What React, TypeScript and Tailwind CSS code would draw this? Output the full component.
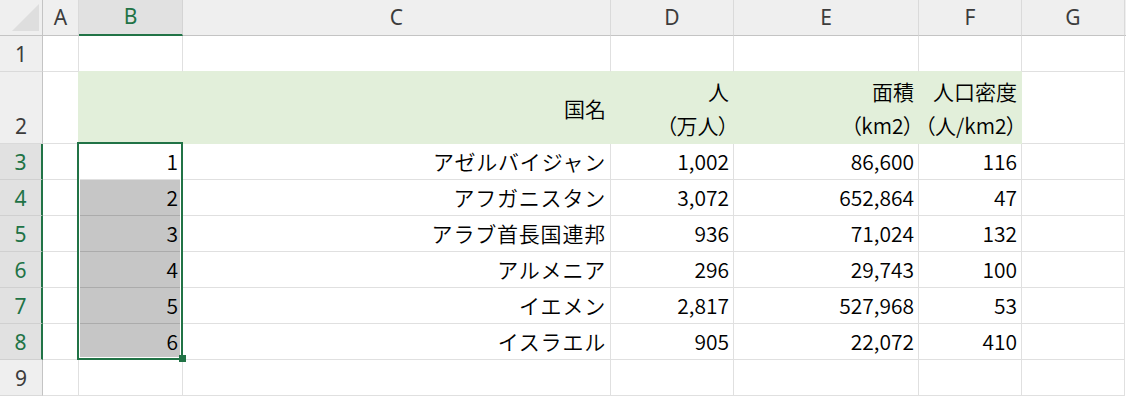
import React from "react";

type Row = [string, string, string, string, string];

const data: Row[] = [
  ["1", "アゼルバイジャン", "1,002", "86,600", "116"],
  ["2", "アフガニスタン", "3,072", "652,864", "47"],
  ["3", "アラブ首長国連邦", "936", "71,024", "132"],
  ["4", "アルメニア", "296", "29,743", "100"],
  ["5", "イエメン", "2,817", "527,968", "53"],
  ["6", "イスラエル", "905", "22,072", "410"],
];

function ColHead({ label, selected = false }: { label: string; selected?: boolean }) {
  return selected ? (
    <div className="flex items-center justify-center bg-[#e1e1e1] border-r border-r-[#d4d4d4] border-b-2 border-b-[#217346] text-[#217346] text-[21px] font-normal font-['Noto_Sans',sans-serif]">
      {label}
    </div>
  ) : (
    <div className="flex items-center justify-center bg-[#efefef] border-r border-r-[#dadada] border-b border-b-[#c4c4c4] text-[#3c3c3c] text-[21px] font-normal font-['Noto_Sans',sans-serif]">
      {label}
    </div>
  );
}

function RowHead({ label, selected = false }: { label: string; selected?: boolean }) {
  return selected ? (
    <div className="flex items-end justify-center bg-[#e1e1e1] border-r-2 border-r-[#217346] border-b border-b-[#d0d0d0] text-[#217346] text-[21px] font-normal font-['Noto_Sans',sans-serif]">
      <span className="leading-[34px]">{label}</span>
    </div>
  ) : (
    <div className="flex items-end justify-center bg-[#efefef] border-r border-r-[#c4c4c4] border-b border-b-[#dadada] text-[#3c3c3c] text-[21px] font-normal font-['Noto_Sans',sans-serif]">
      <span className="leading-[34px]">{label}</span>
    </div>
  );
}

function Cell({ children }: { children?: React.ReactNode }) {
  return (
    <div className="flex items-center justify-end pr-[4px] whitespace-nowrap border-r border-b border-[#e0e0e0] text-[21px]">
      {children}
    </div>
  );
}

function GreenCell({ children }: { children?: React.ReactNode }) {
  return (
    <div className="flex flex-col items-end justify-center pr-[4px] whitespace-nowrap border-r border-b border-[#e2efda] bg-[#e2efda] text-[21px] leading-[34px]">
      {children}
    </div>
  );
}

export default function App() {
  return (
    <div className="relative w-[1126px] h-[396px] overflow-hidden bg-white text-black font-[350] font-['Noto_Sans_CJK_JP',sans-serif]">
      <div className="grid w-full h-full grid-cols-[43px_36px_104px_428px_123px_185px_103px_103px_1fr] grid-rows-[36px_36px_72px_repeat(7,36px)]">
        {/* header row */}
        <div className="relative bg-[#efefef] border-r border-b border-[#c4c4c4]">
          <svg className="absolute left-0 top-0" width="43" height="36" viewBox="0 0 43 36">
            <polygon points="12,31 39,4 39,31" fill="#dedede" />
          </svg>
        </div>
        <ColHead label="A" />
        <ColHead label="B" selected />
        <ColHead label="C" />
        <ColHead label="D" />
        <ColHead label="E" />
        <ColHead label="F" />
        <ColHead label="G" />
        <div className="bg-[#efefef] border-b border-b-[#c4c4c4]" />

        {/* row 1 */}
        <RowHead label="1" />
        <Cell />
        <div className="border-r border-r-[#e0e0e0] border-b border-b-[#e2efda]" />
        <div className="border-r border-r-[#e0e0e0] border-b border-b-[#e2efda]" />
        <div className="border-r border-r-[#e0e0e0] border-b border-b-[#e2efda]" />
        <div className="border-r border-r-[#e0e0e0] border-b border-b-[#e2efda]" />
        <div className="border-r border-r-[#e0e0e0] border-b border-b-[#e2efda]" />
        <Cell />
        <div />

        {/* row 2 */}
        <RowHead label="2" />
        <div className="border-r border-r-[#e2efda] border-b border-b-[#e0e0e0]" />
        <GreenCell />
        <GreenCell>
          <span>国名</span>
        </GreenCell>
        <GreenCell>
          <span>人</span>
          <span className="[font-feature-settings:'palt']">（万人）</span>
        </GreenCell>
        <GreenCell>
          <span>面積</span>
          <span className="[font-feature-settings:'palt']">（km2）</span>
        </GreenCell>
        <GreenCell>
          <span>人口密度</span>
          <span className="[font-feature-settings:'palt']">（人/km2）</span>
        </GreenCell>
        <Cell />
        <div />

        {/* data rows */}
        {data.map((r, i) => (
          <React.Fragment key={r[0]}>
            <RowHead label={String(i + 3)} selected />
            <Cell />
            {i === 0 ? (
              <Cell>{r[0]}</Cell>
            ) : (
              <div className="flex items-center justify-end pr-[4px] whitespace-nowrap bg-[#c6c6c6] border-r border-r-[#c6c6c6] border-b border-b-[#ababab] text-[21px]">
                {r[0]}
              </div>
            )}
            <Cell>
              <span className="tracking-[0.8px]">{r[1]}</span>
            </Cell>
            <Cell>{r[2]}</Cell>
            <Cell>{r[3]}</Cell>
            <Cell>{r[4]}</Cell>
            <Cell />
            <div />
          </React.Fragment>
        ))}

        {/* row 9 */}
        <RowHead label="9" />
        <Cell />
        <Cell />
        <Cell />
        <Cell />
        <Cell />
        <Cell />
        <Cell />
        <div />
      </div>

      {/* selection border */}
      <div className="absolute left-[77px] top-[142px] w-[106px] h-[218px] border-2 border-[#217346] pointer-events-none">
        <div className="w-full h-full border border-white" />
      </div>
      {/* fill handle */}
      <div className="absolute left-[179px] top-[355px] w-[7px] h-[7px] bg-[#217346] pointer-events-none" />
    </div>
  );
}
